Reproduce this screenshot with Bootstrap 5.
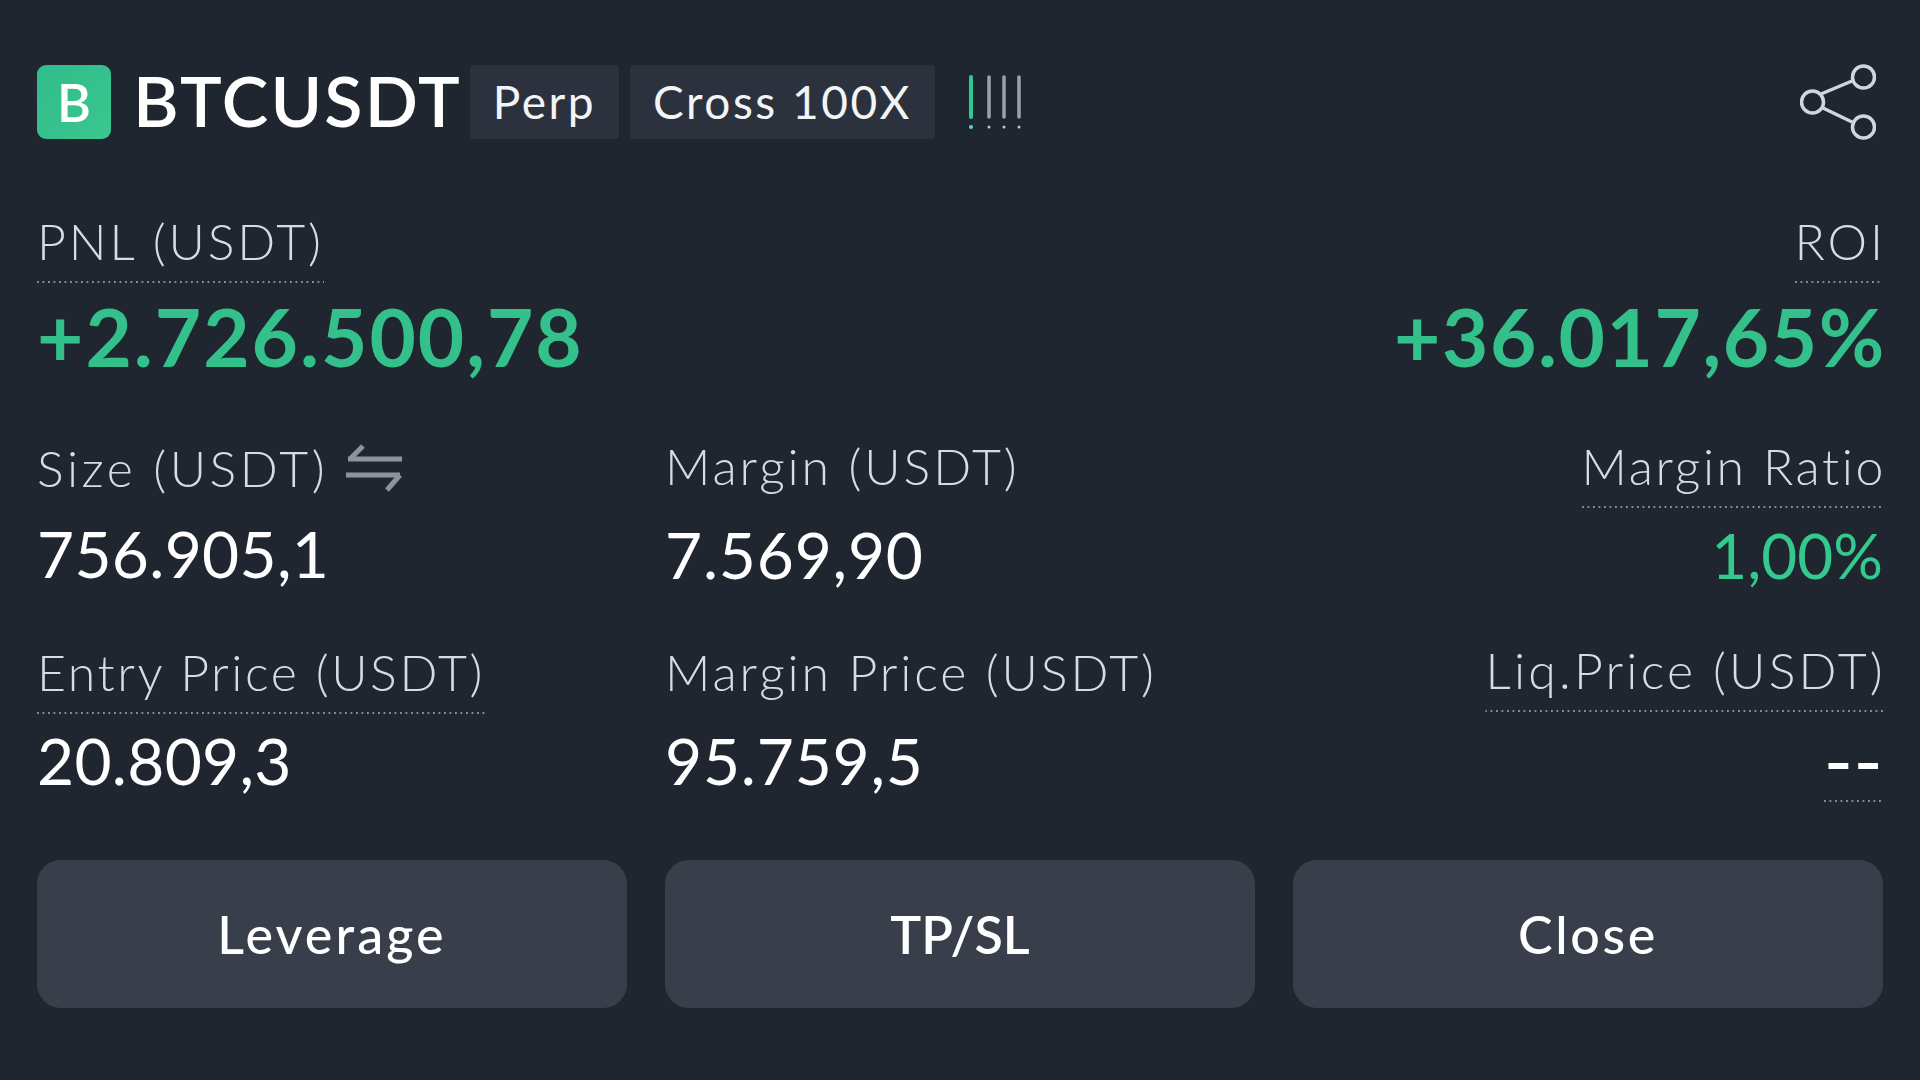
<!DOCTYPE html>
<html lang="en">
<head>
<meta charset="utf-8">
<title>BTCUSDT</title>
<link href="https://cdn.jsdelivr.net/npm/bootstrap@5.3.0/dist/css/bootstrap.min.css" rel="stylesheet">
<style>
html,body{height:100%}
body{background:#1f2630;font-family:"Lato","Liberation Sans",sans-serif;color:#fff;overflow:hidden}
.sheet{width:1920px;height:1080px;padding:64px 37px 0 37px}
.logo-box{width:74px;height:74px;border-radius:9px;background:linear-gradient(135deg,#2fbd8b,#3cc68f);font-size:52px;font-weight:600;line-height:1}
.sym{font-size:70px;font-weight:600;line-height:70px;margin-left:22px;margin-right:-3px;margin-bottom:4px;letter-spacing:2.1px;color:#fff}
.tagx{height:74px;background:#2b323d;border-radius:4px;font-size:46px;line-height:74px;padding:0 23px;margin-left:11px;color:#f2f4f6;letter-spacing:2.5px;font-weight:400}
.bars{margin-left:32px;width:56px;height:60px}
.share{margin-right:7px}
.pnl-row{margin-top:72px}
.lab{font-size:50px;font-weight:300;line-height:58px;color:#d8dbe1;letter-spacing:2.9px}
.lab-w{letter-spacing:3.5px}
.lab-n{letter-spacing:2.6px}
.lab-liq{letter-spacing:3.2px}
.dot-u{display:inline-block;padding-bottom:13px;background:linear-gradient(90deg,#8b8d93 2px,transparent 2px) 0 100%/5.5px 2px repeat-x}
.trim{margin-right:-3px;clip-path:inset(0 3px 0 0)}
.big{font-size:80px;font-weight:700;line-height:92px;color:#33c08a;margin-top:7px;letter-spacing:2px}
.big-r{letter-spacing:1.6px;margin-right:-3px}
.stats{--bs-gutter-x:38px}
.num{font-size:64px;font-weight:400;line-height:72px;color:#fff;letter-spacing:.3px}
.num-w{letter-spacing:.8px}
.row-a{margin-top:55px}
.row-b{margin-top:50px}
.nudge{margin-top:2px}
.gap-s{margin-top:11px}
.gap-m{margin-top:21px}
.gap-l{margin-top:24px}
.swap{width:58px;height:48px;margin-left:18px}
.grn{color:#33c98f;font-size:62px;letter-spacing:0}
.dash{font-size:80px;letter-spacing:0;padding-bottom:7px}
.act{height:148px;width:100%;background:#383f4b;border:0;border-radius:24px;color:#fff;font-size:52px;font-weight:500;letter-spacing:2.6px;--bs-btn-hover-bg:#383f4b;--bs-btn-hover-color:#fff}
.act-wide{letter-spacing:3.1px}
.act-tight{letter-spacing:0;font-weight:600}
.acts{--bs-gutter-x:38px;margin-top:58px}
</style>
</head>
<body>
<div class="sheet">
  <div class="d-flex align-items-center">
    <div class="logo-box d-flex align-items-center justify-content-center text-white">B</div>
    <div class="sym">BTCUSDT</div>
    <div class="tagx">Perp</div>
    <div class="tagx">Cross 100X</div>
    <svg class="bars" viewBox="0 0 56 60" fill="none" stroke-linecap="round" aria-hidden="true">
      <path d="M4 5V45" stroke="#2fc98f" stroke-width="4"/>
      <path d="M22 5V45M37 5V45M52 5V45" stroke="#9ca2ad" stroke-width="3.5"/>
      <circle cx="4" cy="55" r="2" fill="#5fd8c0"/>
      <circle cx="22" cy="55" r="1.5" fill="#c3c7ce"/><circle cx="37" cy="55" r="1.5" fill="#c3c7ce"/><circle cx="52" cy="55" r="1.5" fill="#c3c7ce"/>
    </svg>
    <svg class="ms-auto share" width="76" height="76" viewBox="0 0 76 76" fill="none" stroke="#d2d5da" stroke-width="3.5" aria-hidden="true">
      <circle cx="12.5" cy="38" r="11"/><circle cx="63.5" cy="13" r="11"/><circle cx="63.5" cy="63" r="11"/>
      <path d="M21 30L52 17M23 44L52 58"/>
    </svg>
  </div>

  <div class="d-flex justify-content-between pnl-row">
    <div>
      <div class="lab"><span class="dot-u">PNL (USDT)</span></div>
      <div class="big">+2.726.500,78</div>
    </div>
    <div class="text-end">
      <div class="lab"><span class="dot-u trim">ROI</span></div>
      <div class="big big-r">+36.017,65%</div>
    </div>
  </div>

  <div class="row stats row-a">
    <div class="col-4">
      <div class="lab lab-w d-flex align-items-center nudge">Size (USDT)
        <svg class="swap" viewBox="0 0 58 48" fill="none" stroke="#8d939d" stroke-width="5" aria-hidden="true">
          <path d="M2 15H56M17 2L4 15M0 31H54M41 46L54 31"/>
        </svg>
      </div>
      <div class="num gap-m">756.905,1</div>
    </div>
    <div class="col-4">
      <div class="lab">Margin (USDT)</div>
      <div class="num num-w gap-l">7.569,90</div>
    </div>
    <div class="col-4 text-end">
      <div class="lab lab-n"><span class="dot-u trim">Margin Ratio</span></div>
      <div class="num grn gap-s">1,00%</div>
    </div>
  </div>

  <div class="row stats row-b">
    <div class="col-4">
      <div class="lab lab-n nudge"><span class="dot-u">Entry Price (USDT)</span></div>
      <div class="num gap-s">20.809,3</div>
    </div>
    <div class="col-4">
      <div class="lab nudge">Margin Price (USDT)</div>
      <div class="num num-w gap-l">95.759,5</div>
    </div>
    <div class="col-4 text-end">
      <div class="lab lab-liq"><span class="dot-u trim">Liq.Price (USDT)</span></div>
      <div class="num gap-s"><span class="dot-u dash">--</span></div>
    </div>
  </div>

  <div class="row acts">
    <div class="col-4"><button type="button" class="btn act act-wide">Leverage</button></div>
    <div class="col-4"><button type="button" class="btn act act-tight">TP/SL</button></div>
    <div class="col-4"><button type="button" class="btn act">Close</button></div>
  </div>
</div>
</body>
</html>
